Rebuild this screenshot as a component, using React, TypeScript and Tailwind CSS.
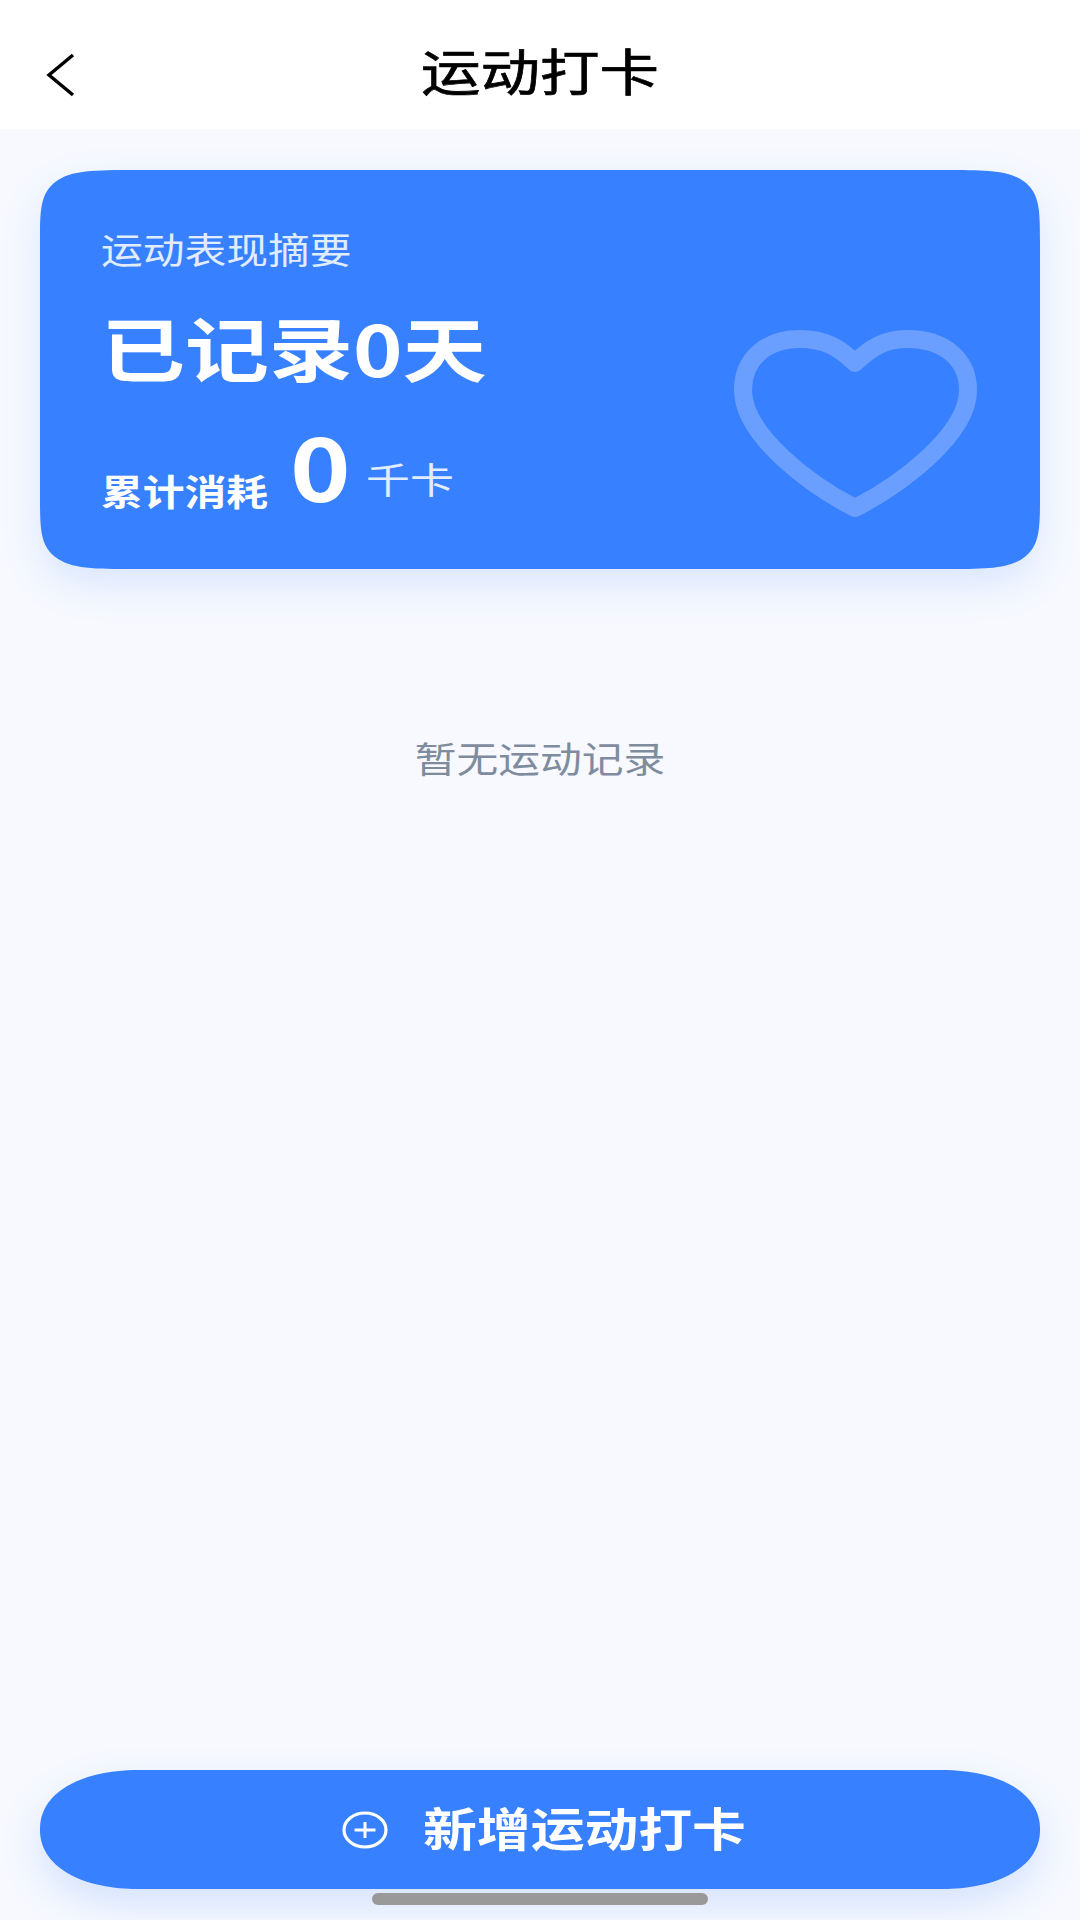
const cjk = "font-['Noto_Sans_CJK_SC','Noto_Sans',sans-serif]";

function BackIcon() {
  return (
    <svg width="36" height="48" viewBox="0 0 36 48" fill="none" className="absolute left-[43px] top-[51px]">
      <path d="M30 4 L6 24 L30 44" stroke="#000" strokeWidth="3.4" />
    </svg>
  );
}

function HeartIcon() {
  return (
    <svg width="300" height="250" viewBox="0 0 300 250" fill="none" className="absolute left-[660px] top-[130px]">
      <path
        d="M155 63 C140 48 125 39 100 39 C65 39 43 60 43 90 C43 135 110 185 155 208 C200 185 268 135 268 90 C268 60 245 39 207 39 C185 39 170 48 155 63 Z"
        stroke="#6b9fff"
        strokeWidth="18"
        strokeLinejoin="round"
      />
    </svg>
  );
}

function PlusIcon() {
  return (
    <svg width="46" height="38" viewBox="0 0 46 38" fill="none">
      <ellipse cx="23" cy="19" rx="21" ry="17" stroke="#fff" strokeWidth="3.2" />
      <path d="M12.5 19 H33.5 M23 11 V27" stroke="#fff" strokeWidth="3" />
    </svg>
  );
}

export default function App() {
  return (
    <div className={`relative flex min-h-[1920px] flex-col overflow-hidden bg-[#f7f9fe] ${cjk}`}>
      {/* Header */}
      <div className="relative flex h-[129px] items-center justify-center bg-white">
        <BackIcon />
        <h1 className="translate-y-[4px] scale-x-[1.19] text-[50px] leading-[60px] font-normal text-black [-webkit-text-stroke:0.7px_#000]">运动打卡</h1>
      </div>

      {/* Summary card */}
      <div className="relative mx-10 mt-[41px] h-[399px] rounded-[98px/74px] bg-[#3780ff] pl-[61px] pt-[55px] shadow-[0_16px_40px_rgba(55,128,255,0.15)] [corner-shape:squircle]">
        <p className="origin-left scale-x-[1.16] text-[36px] leading-[46px] text-white/85">运动表现摘要</p>
        <p className="mt-[34px] origin-left scale-x-[1.2] text-[70px] leading-[84px] font-bold text-white">已记录0天</p>
        <div className="mt-[35px] flex items-baseline">
          <span className="w-[166px] origin-left translate-y-[4px] scale-x-[1.16] text-[36px] leading-[46px] font-bold whitespace-nowrap text-white">累计消耗</span>
          <span className="ml-[23px] w-[58px] origin-left scale-x-[1.17] text-[88px] leading-[80px] font-bold text-white">0</span>
          <span className="ml-[18px] origin-left -translate-y-[8px] scale-x-[1.22] text-[36px] leading-[46px] text-white/85">千卡</span>
        </div>
        <HeartIcon />
      </div>

      {/* Empty state */}
      <p className="mt-[165px] scale-x-[1.16] text-center text-[36px] leading-[46px] text-[#7f8c9e]">暂无运动记录</p>

      {/* Add button */}
      <div className="mx-10 mt-auto mb-[31px] flex h-[119px] items-center justify-center gap-[35px] rounded-[100px/59px] bg-[#3780ff] shadow-[0_16px_40px_rgba(55,128,255,0.18)] [corner-shape:superellipse(1.12)]">
        <PlusIcon />
        <span className="w-[316px] origin-left -translate-y-[4px] scale-x-[1.17] text-[46px] leading-[56px] font-bold whitespace-nowrap text-white">新增运动打卡</span>
      </div>

      {/* Home indicator */}
      <div className="absolute bottom-[15px] left-[372px] h-3 w-[336px] rounded-md bg-[#999999]" />
    </div>
  );
}
